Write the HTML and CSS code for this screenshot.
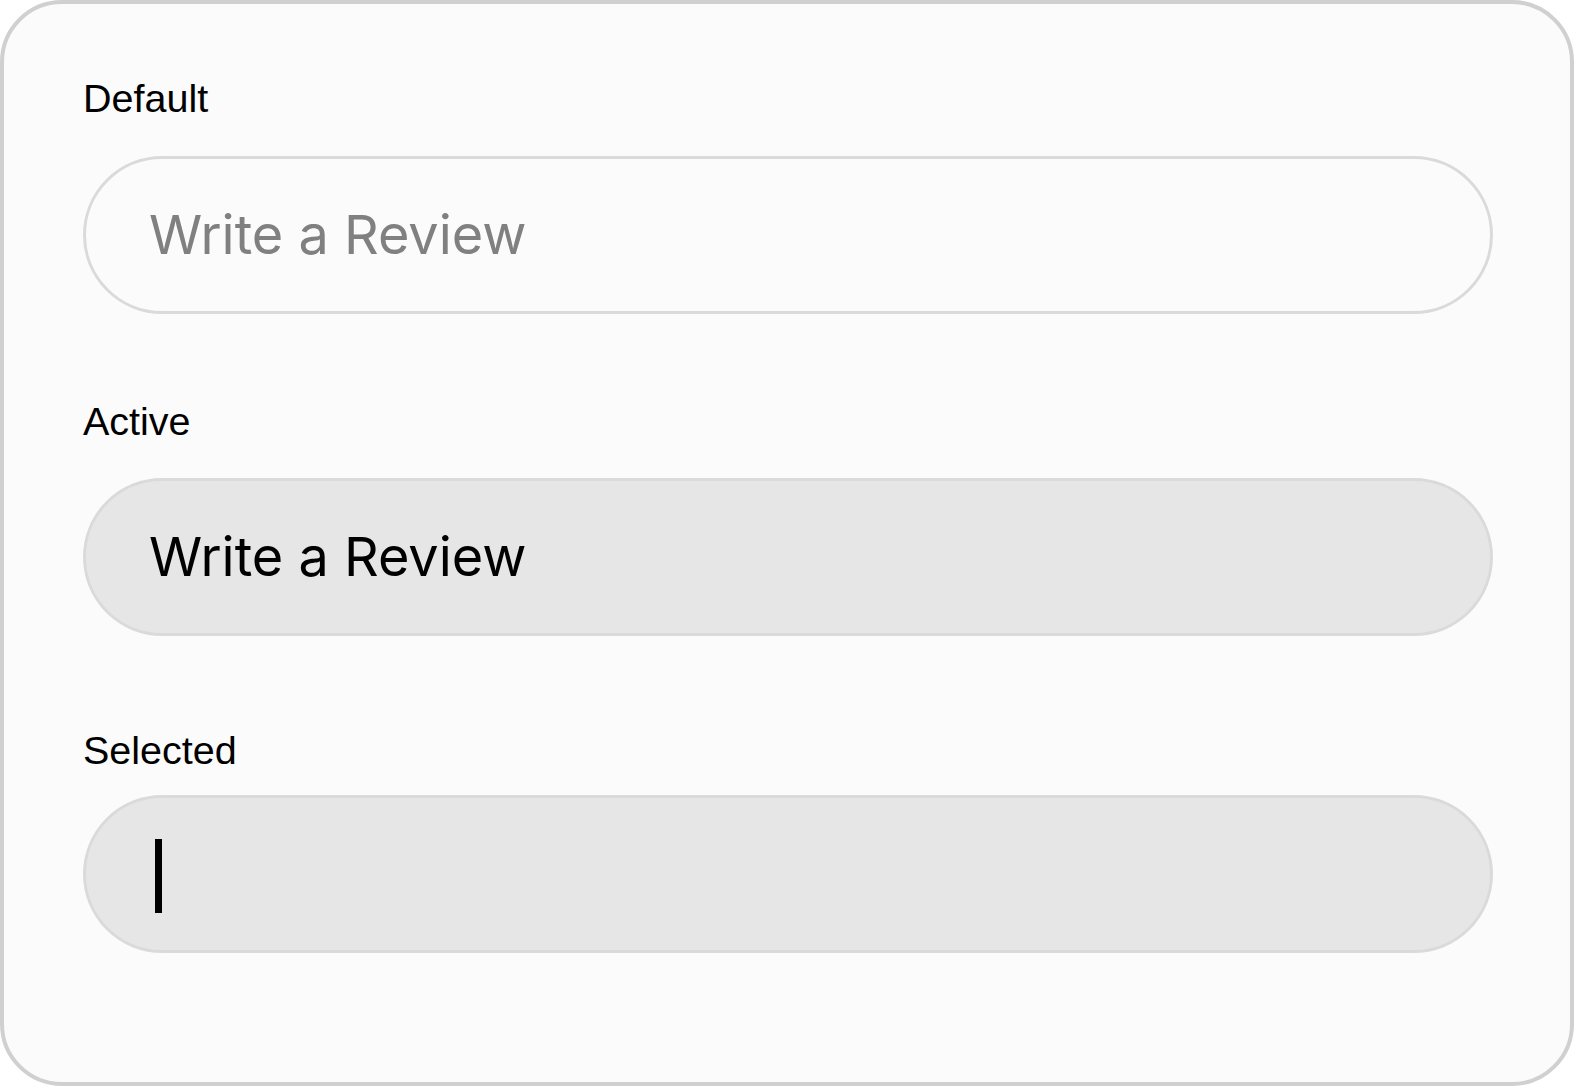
FILE: index.html
```html
<!DOCTYPE html>
<html lang="en">
<head>
<meta charset="utf-8">
<title>Review input states</title>
<link rel="stylesheet" href="styles.css">
</head>
<body>
<main class="card">
  <section class="field field--default">
    <div class="label">Default</div>
    <div class="input input--default"><span class="placeholder">Write a Review</span></div>
  </section>
  <section class="field field--active">
    <div class="label">Active</div>
    <div class="input input--filled"><span class="value">Write a Review</span></div>
  </section>
  <section class="field field--selected">
    <div class="label">Selected</div>
    <div class="input input--filled"><span class="caret"></span></div>
  </section>
</main>
</body>
</html>
```

FILE: styles.css
```css
html, body {
  margin: 0;
  padding: 0;
  background: #ffffff;
}

.card {
  box-sizing: border-box;
  width: 1574px;
  height: 1086px;
  border: 4px solid #d0d0d0;
  border-radius: 62px;
  background: #fcfbfb;
  padding: 72px 77px 0 79px;
  display: flex;
  flex-direction: column;
}

.field {
  display: flex;
  flex-direction: column;
}

.label {
  font-family: "Liberation Sans", Arial, sans-serif;
  font-size: 39.5px;
  line-height: 45px;
  color: #000000;
}

.field--default .input { margin-top: 35px; }
.field--active { margin-top: 85px; }
.field--active .input { margin-top: 34px; }
.field--selected { margin-top: 92px; }
.field--selected .input { margin-top: 22px; }

.input {
  box-sizing: border-box;
  height: 158px;
  border: 3px solid #dadada;
  border-radius: 79px;
  padding-left: 63px;
  display: flex;
  align-items: center;
  font-family: Inter, "Noto Sans", sans-serif;
  font-size: 54px;
  line-height: 1;
}

.input--default {
  background: #fcfbfb;
}

.input--filled {
  background: #e6e6e6;
}

.placeholder {
  color: #808080;
}

.value {
  color: #000000;
}

.caret {
  display: block;
  width: 7px;
  height: 74px;
  margin-left: 6px;
  margin-top: 4px;
  background: #000000;
}
```
